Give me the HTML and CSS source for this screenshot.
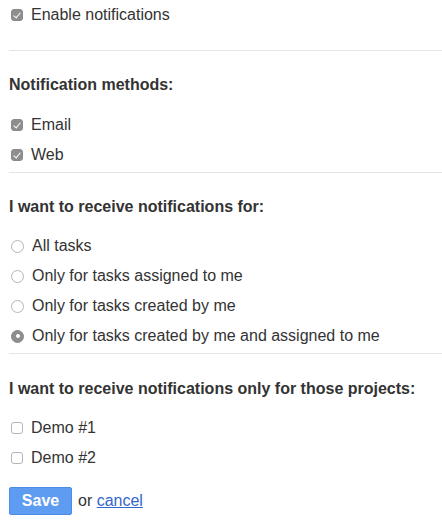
FILE: index.html
```html
<!DOCTYPE html>
<html>
<head>
<meta charset="utf-8">
<link rel="stylesheet" href="styles.css">
</head>
<body>
<form class="form">
  <label class="opt first"><span class="box checked"></span>Enable notifications</label>
  <hr class="sep sep-first">
  <h4 class="heading h-methods">Notification methods:</h4>
  <div class="group g-methods">
    <label class="opt"><span class="box checked"></span>Email</label>
    <label class="opt"><span class="box checked"></span>Web</label>
  </div>
  <hr class="sep">
  <h4 class="heading h-filter">I want to receive notifications for:</h4>
  <div class="group g-filter">
    <label class="opt"><span class="radio"></span>All tasks</label>
    <label class="opt"><span class="radio"></span>Only for tasks assigned to me</label>
    <label class="opt"><span class="radio"></span>Only for tasks created by me</label>
    <label class="opt"><span class="radio checked"></span>Only for tasks created by me and assigned to me</label>
  </div>
  <hr class="sep">
  <h4 class="heading h-projects">I want to receive notifications only for those projects:</h4>
  <div class="group">
    <label class="opt"><span class="box"></span>Demo #1</label>
    <label class="opt"><span class="box"></span>Demo #2</label>
  </div>
  <div class="actions">
    <span class="btn">Save</span>
    <span class="or">or <a class="link" href="#">cancel</a></span>
  </div>
</form>
</body>
</html>
```

FILE: styles.css
```css
html, body {
  margin: 0;
  padding: 0;
  background: #fff;
}
body {
  font-family: "Liberation Sans", Arial, sans-serif;
  font-size: 16px;
  color: #333;
}
.form {
  display: flex;
  flex-direction: column;
  padding-left: 9px;
  padding-top: 1px;
}
.opt {
  display: flex;
  align-items: center;
  height: 30px;
  gap: 8px;
  padding-left: 2px;
}
.opt.first {
  height: 28px;
}
.box {
  width: 12px;
  height: 12px;
  box-sizing: border-box;
  border: 1px solid #b5b5b5;
  border-radius: 3px;
  background: #fff;
  position: relative;
  flex: none;
}
.box.checked {
  background: #8e8e8e;
  border-color: #8a8a8a;
}
.box.checked::after {
  content: "";
  position: absolute;
  left: 3px;
  top: 1px;
  width: 3px;
  height: 6px;
  border-right: 1.5px solid #fff;
  border-bottom: 1.5px solid #fff;
  transform: rotate(40deg);
}
.radio {
  width: 13px;
  height: 13px;
  box-sizing: border-box;
  border: 1px solid #b5b5b5;
  border-radius: 50%;
  background: #fff;
  position: relative;
  flex: none;
}
.radio.checked {
  background: #8e8e8e;
  border-color: #8a8a8a;
}
.radio.checked::after {
  content: "";
  position: absolute;
  left: 3.5px;
  top: 3.5px;
  width: 4px;
  height: 4px;
  border-radius: 50%;
  background: #fff;
}
.sep {
  border: 0;
  border-top: 1px solid #e5e5e5;
  margin: 0;
  height: 0;
}
.sep-first {
  margin-top: 21px;
}
.heading {
  margin: 0;
  font-size: 16px;
  font-weight: bold;
  height: 30px;
  display: flex;
  align-items: center;
  margin-top: 19px;
  margin-bottom: 10px;
}
.h-filter {
  margin-bottom: 9px;
}
.h-projects {
  margin-top: 20px;
  margin-bottom: 9px;
}
.group {
  display: flex;
  flex-direction: column;
}
.g-methods {
  margin-bottom: 2px;
}
.g-filter {
  margin-bottom: 2px;
}
.actions {
  display: flex;
  align-items: center;
  gap: 6px;
  margin-top: 14px;
}
.btn {
  display: inline-flex;
  align-items: center;
  justify-content: center;
  width: 63px;
  height: 28px;
  box-sizing: border-box;
  background: #5e9cf2;
  border: 1px solid #4b8ce8;
  border-radius: 2px;
  color: #fff;
  font-weight: bold;
  font-size: 16px;
}
.or {
  color: #333;
}
.link {
  color: #3366cc;
  text-decoration: underline;
}
```
